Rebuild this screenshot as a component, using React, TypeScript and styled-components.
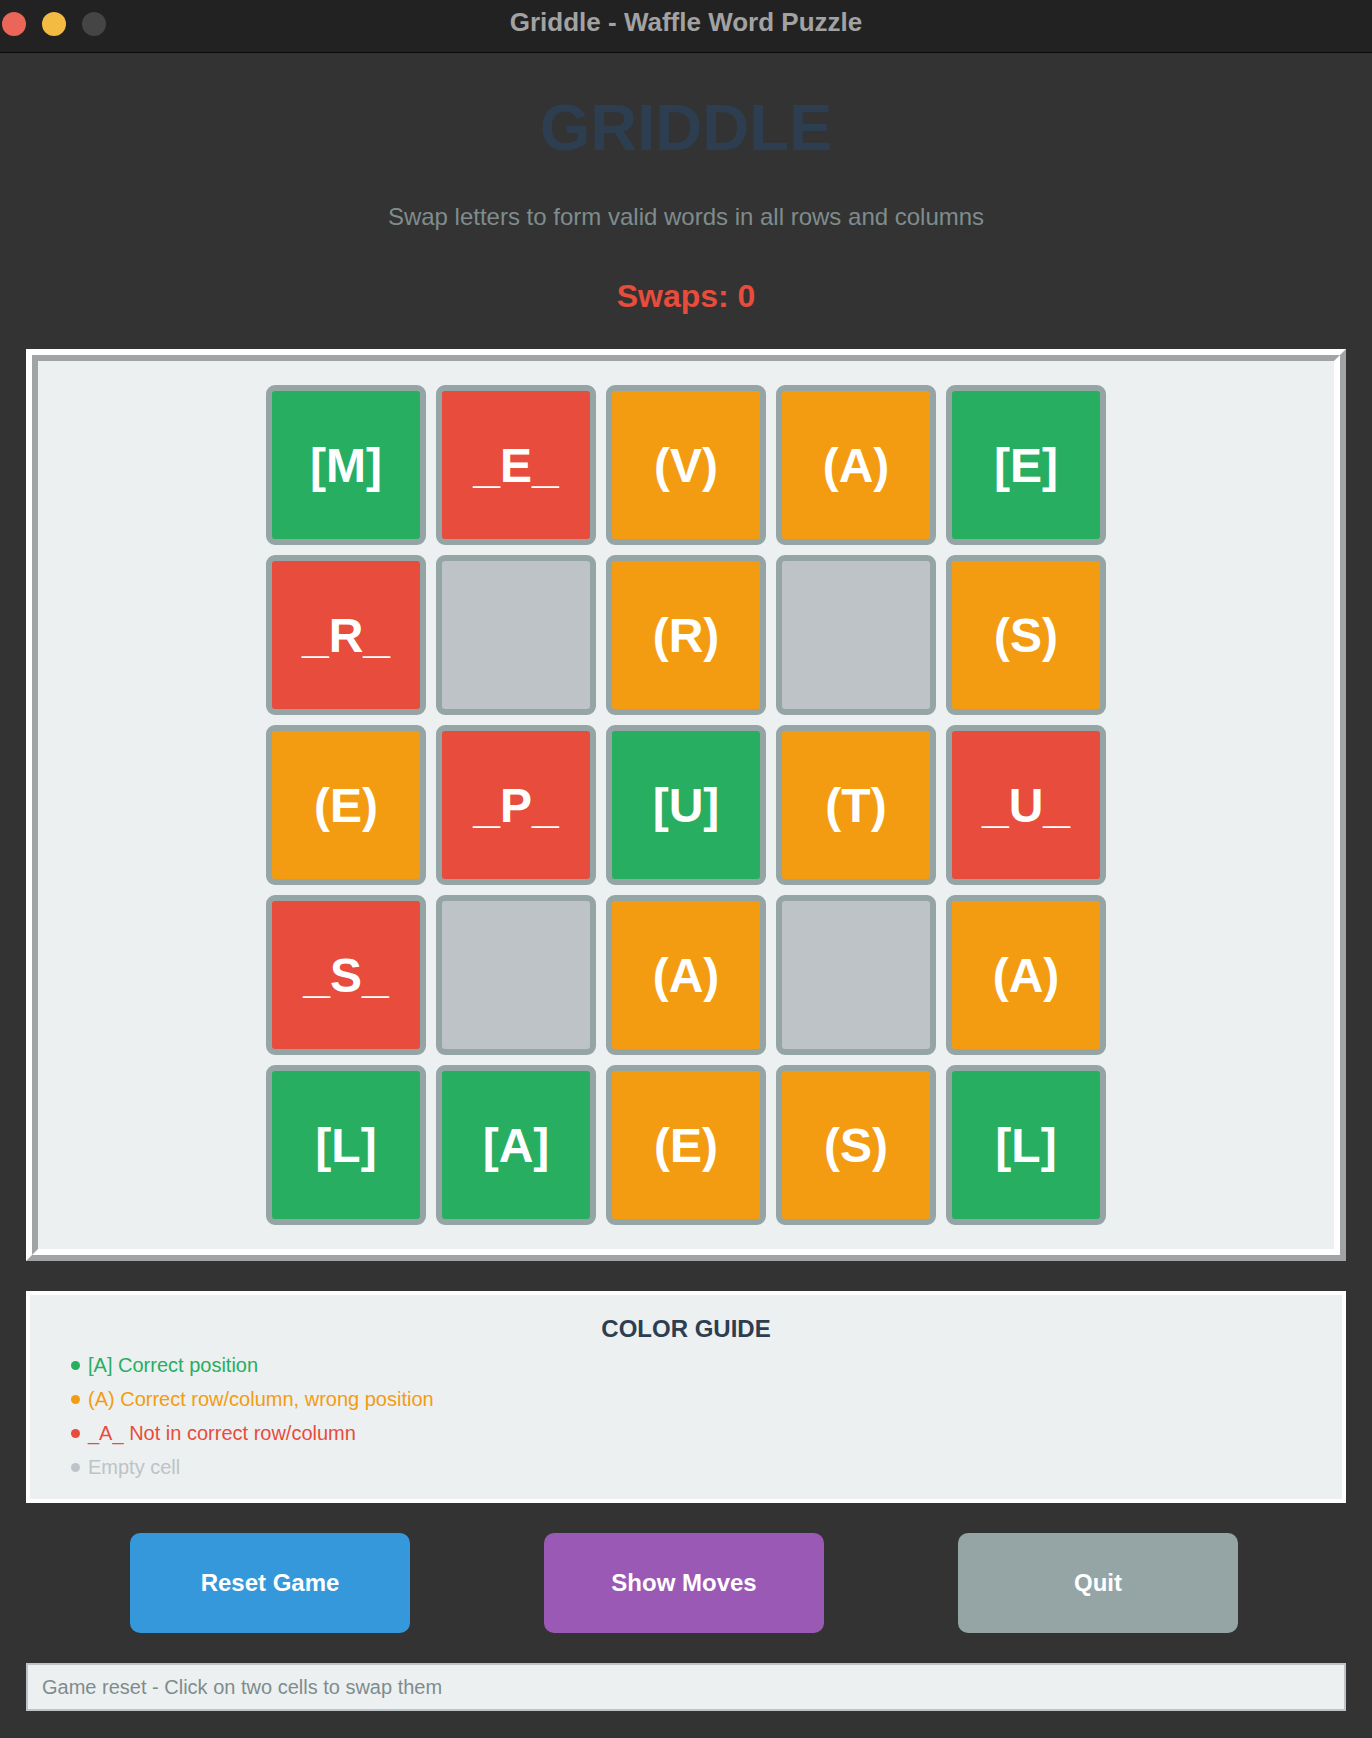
import React from "react";
import styled, { createGlobalStyle } from "styled-components";

const GlobalStyle = createGlobalStyle`
  html, body {
    margin: 0;
    padding: 0;
    background: #333333;
    font-family: "Liberation Sans", Arial, Helvetica, sans-serif;
  }
`;

type Status = "correct" | "present" | "absent" | "empty";

const FILL: Record<Status, string> = {
  correct: "#27ae60",
  present: "#f39c12",
  absent: "#e74c3c",
  empty: "#bdc3c7",
};

const Window = styled.div`
  width: 1372px;
  min-height: 1738px;
  background: #333333;
`;

const TitleBar = styled.div`
  display: grid;
  grid-template-columns: 1fr auto 1fr;
  align-items: center;
  height: 52px;
  background: #222222;
  border-bottom: 1px solid #0b0b0b;
`;

const Lights = styled.div`
  display: flex;
  gap: 16px;
  padding-left: 2px;
  margin-bottom: 4px;
`;

const Light = styled.span<{ $color: string }>`
  width: 24px;
  height: 24px;
  border-radius: 50%;
  background: ${(p) => p.$color};
`;

const WindowTitle = styled.div`
  font-size: 26px;
  font-weight: 700;
  color: #a2a2a2;
  margin-bottom: 8px;
`;

const Header = styled.header`
  display: flex;
  flex-direction: column;
  align-items: center;
`;

const Logo = styled.h1`
  margin: 35px 0 0;
  font-size: 65px;
  line-height: 80px;
  font-weight: 700;
  color: #2c3e50;
`;

const Subtitle = styled.p`
  margin: 34px 0 0;
  font-size: 24px;
  line-height: 30px;
  color: #7f8c8d;
`;

const Swaps = styled.div`
  margin-top: 44px;
  font-size: 32px;
  line-height: 40px;
  font-weight: 700;
  color: #e74c3c;
`;

const BoardOuter = styled.div`
  margin: 33px 26px 0;
  border: 6px solid;
  border-color: #ffffff #a0a4a5 #a0a4a5 #ffffff;
`;

const BoardInner = styled.div`
  border: 6px solid;
  border-color: #a0a4a5 #ffffff #ffffff #a0a4a5;
  background: #ecf0f1;
  padding: 24px 0;
  display: flex;
  justify-content: center;
`;

const Grid = styled.div`
  display: grid;
  grid-template-columns: repeat(5, 160px);
  grid-auto-rows: 160px;
  gap: 10px;
`;

const Cell = styled.div<{ $status: Status }>`
  box-sizing: border-box;
  border: 6px solid #95a5a6;
  border-radius: 9px;
  background: ${(p) => FILL[p.$status]};
  display: flex;
  align-items: center;
  justify-content: center;
  color: #ffffff;
  font-size: 48px;
  font-weight: 700;
`;

const Guide = styled.section`
  margin: 30px 26px 0;
  border: 4px solid #ffffff;
  background: #ecf0f1;
  padding: 19px 0 15px 41px;
`;

const GuideTitle = styled.h2`
  margin: 0 0 4px -41px;
  text-align: center;
  font-size: 24px;
  line-height: 30px;
  font-weight: 700;
  color: #2c3e50;
`;

const GuideItem = styled.div<{ $color: string }>`
  display: flex;
  align-items: center;
  gap: 8px;
  height: 34px;
  font-size: 20px;
  color: ${(p) => p.$color};
`;

const Dot = styled.span<{ $color: string }>`
  width: 9px;
  height: 9px;
  border-radius: 50%;
  background: ${(p) => p.$color};
`;

const Buttons = styled.div`
  display: flex;
  gap: 134px;
  margin: 30px 0 0 130px;
`;

const Button = styled.button<{ $bg: string }>`
  width: 280px;
  height: 100px;
  border: none;
  border-radius: 10px;
  background: ${(p) => p.$bg};
  color: #ffffff;
  font-family: inherit;
  font-size: 24px;
  font-weight: 700;
  cursor: pointer;
`;

const StatusBar = styled.div`
  box-sizing: border-box;
  height: 48px;
  margin: 30px 26px 0;
  border: 2px solid #bdc3c7;
  background: #ecf0f1;
  padding-left: 14px;
  display: flex;
  align-items: center;
  font-size: 20px;
  color: #7f8c8d;
`;

const board: [string, Status][][] = [
  [["[M]", "correct"], ["_E_", "absent"], ["(V)", "present"], ["(A)", "present"], ["[E]", "correct"]],
  [["_R_", "absent"], ["", "empty"], ["(R)", "present"], ["", "empty"], ["(S)", "present"]],
  [["(E)", "present"], ["_P_", "absent"], ["[U]", "correct"], ["(T)", "present"], ["_U_", "absent"]],
  [["_S_", "absent"], ["", "empty"], ["(A)", "present"], ["", "empty"], ["(A)", "present"]],
  [["[L]", "correct"], ["[A]", "correct"], ["(E)", "present"], ["(S)", "present"], ["[L]", "correct"]],
];

const guide: [string, Status][] = [
  ["[A] Correct position", "correct"],
  ["(A) Correct row/column, wrong position", "present"],
  ["_A_ Not in correct row/column", "absent"],
  ["Empty cell", "empty"],
];

export default function App() {
  return (
    <Window>
      <GlobalStyle />
      <TitleBar>
        <Lights>
          <Light $color="#ec6559" />
          <Light $color="#f4bb43" />
          <Light $color="#454545" />
        </Lights>
        <WindowTitle>Griddle - Waffle Word Puzzle</WindowTitle>
        <span />
      </TitleBar>

      <Header>
        <Logo>GRIDDLE</Logo>
        <Subtitle>Swap letters to form valid words in all rows and columns</Subtitle>
        <Swaps>Swaps: 0</Swaps>
      </Header>

      <BoardOuter>
        <BoardInner>
          <Grid>
            {board.flat().map(([letter, status], i) => (
              <Cell key={i} $status={status}>
                {letter}
              </Cell>
            ))}
          </Grid>
        </BoardInner>
      </BoardOuter>

      <Guide>
        <GuideTitle>COLOR GUIDE</GuideTitle>
        {guide.map(([text, status]) => (
          <GuideItem key={text} $color={FILL[status]}>
            <Dot $color={FILL[status]} />
            {text}
          </GuideItem>
        ))}
      </Guide>

      <Buttons>
        <Button $bg="#3498db">Reset Game</Button>
        <Button $bg="#9b59b6">Show Moves</Button>
        <Button $bg="#95a5a6">Quit</Button>
      </Buttons>

      <StatusBar>Game reset - Click on two cells to swap them</StatusBar>
    </Window>
  );
}
